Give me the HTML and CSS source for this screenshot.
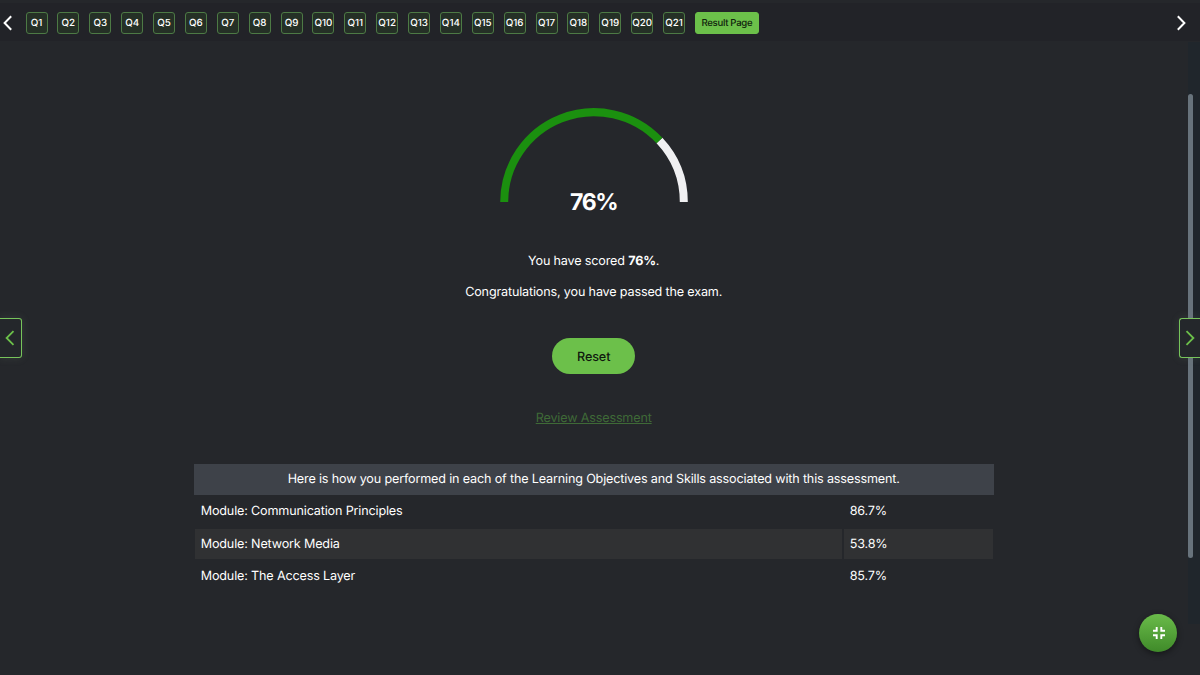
FILE: index.html
```html
<!DOCTYPE html>
<html lang="en">
<head>
  <meta charset="UTF-8">
  <meta name="viewport" content="width=device-width, initial-scale=1.0">
  <title>Assessment Results</title>
  <link rel="stylesheet" href="styles.css">
</head>
<body>
  <nav class="question-bar">
    <svg class="arrow" viewBox="0 0 10 16"><path d="M8.2 1.2L1.6 8l6.6 6.8"/></svg>
    <div class="questions">
      <button class="question">Q1</button>
      <button class="question">Q2</button>
      <button class="question">Q3</button>
      <button class="question">Q4</button>
      <button class="question">Q5</button>
      <button class="question">Q6</button>
      <button class="question">Q7</button>
      <button class="question">Q8</button>
      <button class="question">Q9</button>
      <button class="question">Q10</button>
      <button class="question">Q11</button>
      <button class="question">Q12</button>
      <button class="question">Q13</button>
      <button class="question">Q14</button>
      <button class="question">Q15</button>
      <button class="question">Q16</button>
      <button class="question">Q17</button>
      <button class="question">Q18</button>
      <button class="question">Q19</button>
      <button class="question">Q20</button>
      <button class="question">Q21</button>
      <button class="question result-page">Result Page</button>
    </div>
    <svg class="arrow" viewBox="0 0 10 16"><path d="M1.8 1.2L8.4 8l-6.6 6.8"/></svg>
  </nav>

  <main class="results">
    <div class="gauge">
      <svg viewBox="0 0 188 94">
        <path class="gauge-track" d="M159.46 32.53A89.8 89.8 0 0 1 183.8 94"/>
        <path class="gauge-value" d="M4.2 94A89.8 89.8 0 0 1 159.46 32.53"/>
      </svg>
      <div class="gauge-label">76%</div>
    </div>
    <p class="score">You have scored <strong>76%</strong>.</p>
    <p class="message">Congratulations, you have passed the exam.</p>
    <button class="reset">Reset</button>
    <a class="review" href="#">Review Assessment</a>

    <table class="objectives">
      <thead>
        <tr><th colspan="2">Here is how you performed in each of the Learning Objectives and Skills associated with this assessment.</th></tr>
      </thead>
      <tbody>
        <tr><td>Module: Communication Principles</td><td class="percent">86.7%</td></tr>
        <tr><td>Module: Network Media</td><td class="percent">53.8%</td></tr>
        <tr><td>Module: The Access Layer</td><td class="percent">85.7%</td></tr>
      </tbody>
    </table>
  </main>

  <div class="scroll-track"><div class="scroll-thumb"></div></div>

  <button class="page-nav prev"><svg viewBox="0 0 10 16"><path d="M8.5 1.2L1.6 8l6.9 6.8"/></svg></button>
  <button class="page-nav next"><svg viewBox="0 0 10 16"><path d="M1.5 1.2L8.4 8l-6.9 6.8"/></svg></button>

  <button class="fullscreen">
    <svg viewBox="0 0 12 12"><path d="M3.7 0v3.7H0M8.3 0v3.7H12M0 8.3h3.7V12M12 8.3H8.3V12"/></svg>
  </button>
</body>
</html>
```

FILE: styles.css
```css
* {
  box-sizing: border-box;
}
body {
  margin: 0;
  height: 675px;
  overflow: hidden;
  position: relative;
  background-color: #25272b;
  color: #fff;
  font-family: Inter, "Liberation Sans", sans-serif;
  font-size: 12.6px;
  letter-spacing: -0.16px;
  text-rendering: geometricPrecision;
}
button {
  font-family: inherit;
  text-rendering: inherit;
  padding: 0;
  cursor: pointer;
}
.question-bar {
  display: flex;
  align-items: center;
  height: 38px;
  margin-top: 3px;
  padding: 1px 14px 0 3px;
  background-color: #222328;
}
.arrow {
  width: 10px;
  height: 16px;
  fill: none;
  stroke: #fff;
  stroke-width: 2;
}
.questions {
  display: flex;
  flex: 1;
  gap: 9.88px;
  margin-left: 12.5px;
}
.question {
  width: 22px;
  height: 22px;
  padding-top: 1px;
  border: 1px solid #4d7a45;
  border-radius: 3px;
  background-color: #253026;
  color: #fff;
  font-size: 9.8px;
  font-weight: 500;
  white-space: nowrap;
}
.result-page {
  width: 64px;
  border-color: #6cc04a;
  background-color: #6cc04a;
  color: #10240d;
  font-size: 9.6px;
  letter-spacing: -0.3px;
}
.results {
  display: flex;
  flex-direction: column;
  align-items: center;
  width: 1187.4px;
  padding-top: 67px;
}
.gauge {
  width: 188px;
  height: 108px;
}
.gauge svg {
  display: block;
  width: 188px;
  height: 94px;
  fill: none;
  stroke-width: 8;
}
.gauge-track {
  stroke: #f0f0f2;
}
.gauge-value {
  stroke: #1b900f;
}
.gauge-label {
  margin-top: -14px;
  line-height: 28px;
  text-align: center;
  font-size: 23px;
  font-weight: 700;
  letter-spacing: -1.3px;
}
.score,
.message {
  margin: 0;
  line-height: 20px;
}
.score {
  margin-top: 36px;
}
.message {
  margin-top: 11px;
}
.reset {
  width: 83px;
  height: 36px;
  margin-top: 35px;
  padding-top: 2px;
  border: none;
  border-radius: 18px;
  background-color: #6cc04a;
  color: #10180e;
  font-size: 12.6px;
  font-weight: 500;
  letter-spacing: -0.1px;
}
.review {
  margin-top: 35px;
  line-height: 20px;
  color: #3f6a37;
}
.objectives {
  width: 800px;
  margin-top: 35px;
  border-collapse: separate;
  border-spacing: 0;
}
.objectives th {
  height: 31px;
  padding: 0 0 1px;
  background-color: #3e4249;
  font-weight: 400;
}
.objectives td {
  height: 32.5px;
  padding: 0 6px;
  border: 1px solid #25272b;
}
.objectives .percent {
  width: 151px;
}
.objectives tbody tr:nth-child(even) td {
  padding-top: 1px;
  background-color: #303133;
}
.scroll-track {
  position: absolute;
  top: 42px;
  right: 0;
  width: 12px;
  height: 582px;
  padding: 52px 6px 0 0;
  background-color: #20262c;
}
.scroll-thumb {
  width: 5px;
  height: 464px;
  border-radius: 3px;
  background-color: #68737c;
}
.page-nav {
  position: absolute;
  top: 318px;
  display: flex;
  align-items: center;
  width: 22px;
  height: 40px;
  border: 1px solid #77c45b;
  background-color: #24272b;
  box-shadow: 0 0 8px rgba(120, 140, 120, 0.2);
}
.page-nav svg {
  width: 10px;
  height: 16px;
  fill: none;
  stroke: #6cc04a;
  stroke-width: 1.8;
}
.prev {
  left: 0;
  padding-left: 5px;
  border-left: none;
  border-radius: 0 3px 3px 0;
}
.next {
  right: 0;
  width: 21px;
  padding-left: 5px;
  border-right: none;
  border-radius: 3px 0 0 3px;
}
.fullscreen {
  position: absolute;
  right: 23px;
  bottom: 23px;
  display: flex;
  align-items: center;
  justify-content: center;
  width: 38px;
  height: 38px;
  border: none;
  border-radius: 50%;
  background: linear-gradient(#6abb4a, #3f8a29);
  box-shadow: 0 2px 6px rgba(0, 0, 0, 0.45);
}
.fullscreen svg {
  width: 12px;
  height: 12px;
  margin-left: 1px;
  fill: none;
  stroke: #fff;
  stroke-width: 1.9;
}
```
